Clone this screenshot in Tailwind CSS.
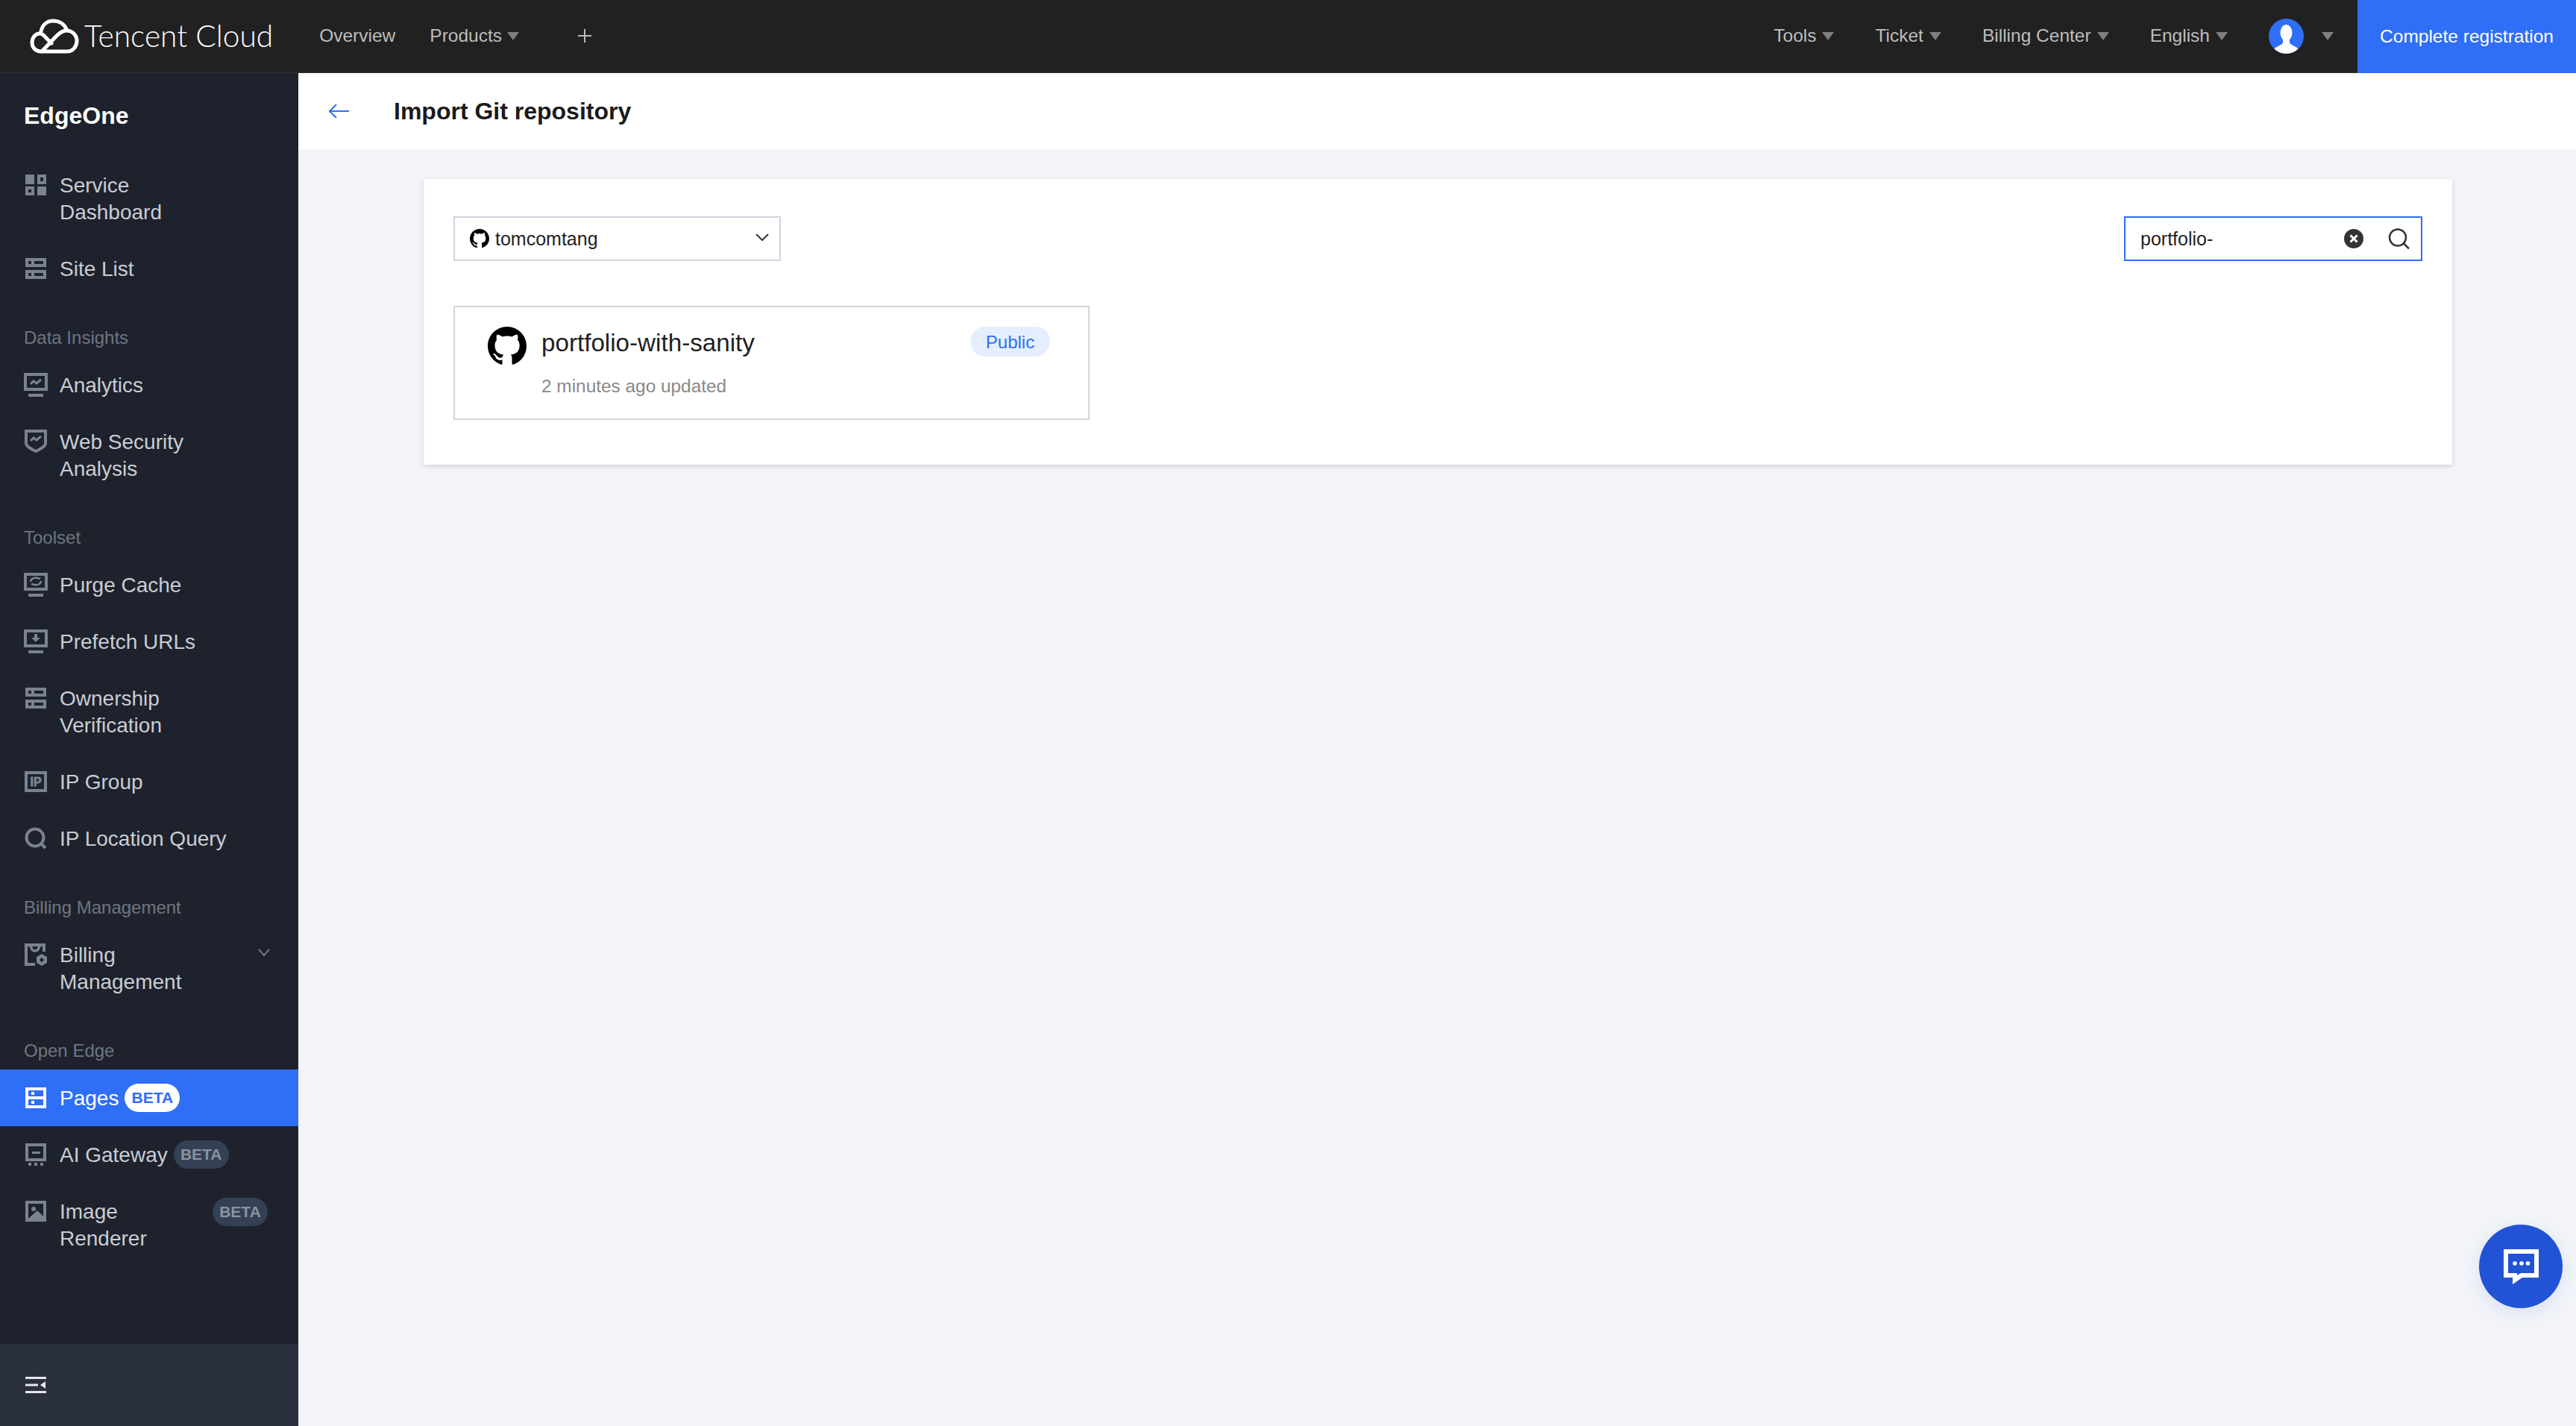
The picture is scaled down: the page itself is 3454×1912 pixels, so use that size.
<!DOCTYPE html>
<html lang="en">
<head>
  <meta charset="UTF-8" />
  <title>Import Git repository</title>
  <script src="https://cdn.jsdelivr.net/npm/@tailwindcss/browser@4"></script>
</head>
<body class="relative flex h-screen flex-col overflow-hidden bg-[#f2f4f8] font-['Liberation_Sans',sans-serif] text-[24px] text-[#1f1f1f]">

  <!-- top bar -->
  <header class="flex h-[98px] shrink-0 items-center border-b-2 border-[#2b2b2b] bg-[#212121] text-[24.5px] text-[#bdbdbd]">
    <svg class="ml-10 h-[47px] w-[66px] shrink-0" viewBox="0 0 66 47" fill="none" stroke="#fff" stroke-width="5" stroke-linecap="round" stroke-linejoin="round">
      <path d="M49 14C46 7 39 3 31 3C23 3 17 8 15 17" />
      <path d="M29 33L22 26C19 22 16 20 13 20C7 20 3 26 3 32C3 39 8 44 15 44H50C58 44 63 37 63 30C63 22 57 16 49 16C43 16 39 20 35 24L16 44" />
    </svg>
    <span class="ml-[7px] font-['Lato',sans-serif] text-[40.7px] leading-none font-light text-white">Tencent Cloud</span>
    <a class="ml-[62px]">Overview</a>
    <a class="ml-[46px] flex items-center gap-[7px]">Products
      <svg class="h-[11px] w-4" viewBox="0 0 16 11"><path d="M0 0h16L8 11z" fill="#7f7f7f" /></svg>
    </a>
    <svg class="ml-[79px] h-[18px] w-[18px]" viewBox="0 0 18 18"><path d="M8 0h2v8h8v2h-8v8H8v-8H0V8h8z" fill="#bdbdbd" /></svg>

    <div class="ml-auto flex items-center gap-[55px]">
      <a class="flex items-center gap-2">Tools
        <svg class="h-[11px] w-4" viewBox="0 0 16 11"><path d="M0 0h16L8 11z" fill="#7f7f7f" /></svg>
      </a>
      <a class="flex items-center gap-2">Ticket
        <svg class="h-[11px] w-4" viewBox="0 0 16 11"><path d="M0 0h16L8 11z" fill="#7f7f7f" /></svg>
      </a>
      <a class="flex items-center gap-2">Billing Center
        <svg class="h-[11px] w-4" viewBox="0 0 16 11"><path d="M0 0h16L8 11z" fill="#7f7f7f" /></svg>
      </a>
      <a class="flex items-center gap-2">English
        <svg class="h-[11px] w-4" viewBox="0 0 16 11"><path d="M0 0h16L8 11z" fill="#7f7f7f" /></svg>
      </a>
      <div class="flex items-center gap-6">
        <svg class="h-[47px] w-[47px]" viewBox="0 0 47 47">
          <clipPath id="avatarClip"><circle cx="23.5" cy="23.5" r="23.5" /></clipPath>
          <circle cx="23.5" cy="23.5" r="23.5" fill="#2f6ef6" />
          <g clip-path="url(#avatarClip)" fill="#fff">
            <ellipse cx="23.5" cy="19" rx="8" ry="11" />
            <path d="M19 26h9v6c0 3 9 5 12 9v6H7v-6c3-4 12-6 12-9z" />
          </g>
        </svg>
        <svg class="h-[11px] w-4" viewBox="0 0 16 11"><path d="M0 0h16L8 11z" fill="#7f7f7f" /></svg>
      </div>
    </div>
    <a class="ml-8 flex h-[98px] w-[293px] shrink-0 items-center justify-center self-start bg-[#2f6ef6] text-white">Complete registration</a>
  </header>

  <div class="flex min-h-0 flex-1">
    <!-- sidebar -->
    <aside class="flex w-[400px] shrink-0 flex-col bg-[#1e222d] text-[28px] leading-9 text-[#c9cdd3]">
      <div class="flex h-[112px] shrink-0 items-center pt-[2px] pl-8 text-[32px] font-bold text-white">EdgeOne</div>

      <nav class="flex-1">
        <a class="flex h-[112px] items-start gap-4 pt-5 pl-8">
          <span class="flex h-9 w-8 shrink-0 items-center justify-center text-[#7b838e]">
            <svg class="h-7 w-7" viewBox="0 0 28 28" fill="currentColor" fill-rule="evenodd"><path d="M0 0h12v13H0zM16 0h12v13H16zM20 4v5h4V4zM0 16h12v12H0zM4 20v4h4v-4zM16 16h12v12H16z" /></svg>
          </span>
          <span class="pt-px">Service<br />Dashboard</span>
        </a>
        <a class="flex h-[76px] items-center gap-4 pl-8">
          <span class="flex h-9 w-8 shrink-0 items-center justify-center text-[#7b838e]">
            <svg class="h-7 w-7" viewBox="0 0 28 28" fill="currentColor" fill-rule="evenodd"><path d="M0 0h28v12H0zM4 4v4h4V4zM12 4v4h12V4zM0 16h28v12H0zM4 20v4h4v-4zM12 20v4h12v-4z" /></svg>
          </span>
          <span class="pt-[2px]">Site List</span>
        </a>

        <div class="mt-7 flex h-[52px] items-center pt-[2px] pl-8 text-[24px] text-[#6f7680]">Data Insights</div>
        <a class="flex h-[76px] items-center gap-4 pl-8">
          <span class="flex h-9 w-8 shrink-0 items-center justify-center text-[#7b838e]">
            <svg class="h-8 w-8" viewBox="0 0 32 32" fill="none">
              <path d="M0 0h32v24H0zM4 4v16h24V4zM6 28h20v4H6z" fill="currentColor" fill-rule="evenodd" />
              <path d="M9 15l4-4 4 3 6-5" stroke="currentColor" stroke-width="3" />
            </svg>
          </span>
          <span class="pt-[2px]">Analytics</span>
        </a>
        <a class="flex h-[112px] items-start gap-4 pt-5 pl-8">
          <span class="flex h-9 w-8 shrink-0 items-center justify-center text-[#7b838e]">
            <svg class="h-8 w-8" viewBox="0 0 32 32" fill="none" stroke="currentColor">
              <path d="M3 2h26v17c0 3-8 8-13 10C11 27 3 22 3 19z" stroke-width="4" />
              <path d="M9 15l4-4 4 3 6-5" stroke-width="3" />
            </svg>
          </span>
          <span class="pt-px">Web Security<br />Analysis</span>
        </a>

        <div class="mt-7 flex h-[52px] items-center pt-[2px] pl-8 text-[24px] text-[#6f7680]">Toolset</div>
        <a class="flex h-[76px] items-center gap-4 pl-8">
          <span class="flex h-9 w-8 shrink-0 items-center justify-center text-[#7b838e]">
            <svg class="h-8 w-8" viewBox="0 0 32 32" fill="none">
              <path d="M0 0h32v24H0zM4 4v16h24V4zM6 28h20v4H6z" fill="currentColor" fill-rule="evenodd" />
              <path d="M9 12c0-4 5-6 9-5l4 1M23 11c0 4-5 6-9 5l-4-1" stroke="currentColor" stroke-width="2.5" />
            </svg>
          </span>
          <span class="pt-[2px]">Purge Cache</span>
        </a>
        <a class="flex h-[76px] items-center gap-4 pl-8">
          <span class="flex h-9 w-8 shrink-0 items-center justify-center text-[#7b838e]">
            <svg class="h-8 w-8" viewBox="0 0 32 32" fill="currentColor">
              <path d="M0 0h32v24H0zM4 4v16h24V4zM6 28h20v4H6z" fill-rule="evenodd" />
              <path d="M14 6h4v5h4l-6 6-6-6h4z" />
            </svg>
          </span>
          <span class="pt-[2px]">Prefetch URLs</span>
        </a>
        <a class="flex h-[112px] items-start gap-4 pt-5 pl-8">
          <span class="flex h-9 w-8 shrink-0 items-center justify-center text-[#7b838e]">
            <svg class="h-7 w-7" viewBox="0 0 28 28" fill="currentColor" fill-rule="evenodd"><path d="M0 0h28v12H0zM4 4v4h4V4zM12 4v4h12V4zM0 16h28v12H0zM4 20v4h4v-4zM12 20v4h12v-4z" /></svg>
          </span>
          <span class="pt-px">Ownership<br />Verification</span>
        </a>
        <a class="flex h-[76px] items-center gap-4 pl-8">
          <span class="flex h-9 w-8 shrink-0 items-center justify-center text-[#7b838e]">
            <svg class="h-7 w-[30px]" viewBox="0 0 30 28" fill="currentColor">
              <path d="M0 0h30v28H0zM4 4v20h22V4z" fill-rule="evenodd" />
              <text x="15" y="19.5" text-anchor="middle" font-size="16" font-weight="700" font-family="Liberation Sans" stroke="currentColor" stroke-width="0.8">IP</text>
            </svg>
          </span>
          <span class="pt-[2px]">IP Group</span>
        </a>
        <a class="flex h-[76px] items-center gap-4 pl-8">
          <span class="flex h-9 w-8 shrink-0 items-center justify-center text-[#7b838e]">
            <svg class="h-[30px] w-[30px]" viewBox="0 0 30 30" fill="none" stroke="currentColor" stroke-width="4">
              <circle cx="14" cy="14" r="11.5" />
              <path d="M22 22l6 6" />
            </svg>
          </span>
          <span class="pt-[2px]">IP Location Query</span>
        </a>

        <div class="mt-7 flex h-[52px] items-center pt-[2px] pl-8 text-[24px] text-[#6f7680]">Billing Management</div>
        <a class="flex h-[112px] items-start gap-4 pt-5 pl-8">
          <span class="flex h-9 w-8 shrink-0 items-center justify-center text-[#7b838e]">
            <svg class="h-[30px] w-[30px]" viewBox="0 0 30 30" fill="none" stroke="currentColor">
              <path d="M26 11V2H2v26h12" stroke-width="4" />
              <path d="M8 3c1 5 3 7 6 7s5-2 6-7" stroke-width="3.5" />
              <path d="M23 14l7 4v8l-7 4-7-4v-8zM23 19.500a2.500 2.500 0 1 0 .01 0z" fill="currentColor" fill-rule="evenodd" stroke="none" />
            </svg>
          </span>
          <span class="pt-px">Billing<br />Management</span>
          <svg class="mt-[10px] mr-[38px] ml-auto h-[11px] w-4 text-[#6f7680]" viewBox="0 0 16 11" fill="none" stroke="currentColor" stroke-width="2"><path d="M1 1l7 8 7-8" /></svg>
        </a>

        <div class="mt-7 flex h-[52px] items-center pt-[2px] pl-8 text-[24px] text-[#6f7680]">Open Edge</div>
        <a class="flex h-[76px] items-center gap-4 bg-[#2f6ef6] pl-8 text-white">
          <span class="flex h-9 w-8 shrink-0 items-center justify-center">
            <svg class="h-7 w-7" viewBox="0 0 28 28" fill="currentColor" fill-rule="evenodd"><path d="M0 0h28v28H0zM4 4v8h20V4zM4 16v8h20v-8zM8 6h4v4H8zM8 18h4v4H8z" /></svg>
          </span>
          <span class="flex items-center gap-2">
            <span class="pt-[2px]">Pages</span>
            <span class="flex h-[38px] w-[74px] items-center justify-center rounded-full bg-white text-[21px] font-bold text-[#2f6ef6]">BETA</span>
          </span>
        </a>
        <a class="flex h-[76px] items-center gap-4 pl-8">
          <span class="flex h-9 w-8 shrink-0 items-center justify-center text-[#7b838e]">
            <svg class="h-[30px] w-7" viewBox="0 0 28 30" fill="currentColor">
              <path d="M0 0h28v24H0zM4 4v16h20V4zM9 11h11v3H9z" fill-rule="evenodd" />
              <path d="M4 26h4v4H4zM12 26h4v4h-4zM20 26h4v4h-4z" />
            </svg>
          </span>
          <span class="flex items-center gap-2">
            <span class="pt-[2px]">AI Gateway</span>
            <span class="flex h-[38px] w-[74px] items-center justify-center rounded-full bg-[#344055] text-[21px] font-bold text-[#8b93a0]">BETA</span>
          </span>
        </a>
        <a class="flex h-[112px] items-start gap-4 pt-5 pl-8">
          <span class="flex h-9 w-8 shrink-0 items-center justify-center text-[#7b838e]">
            <svg class="h-7 w-7" viewBox="0 0 28 28" fill="currentColor">
              <path d="M0 0h28v28H0zM4 4v20h20V4z" fill-rule="evenodd" />
              <circle cx="11" cy="11" r="3" />
              <path d="M4 24l12-11 8 8v3z" />
            </svg>
          </span>
          <span class="pt-px">Image<br />Renderer</span>
          <span class="mr-[41px] ml-auto flex h-[38px] w-[74px] items-center justify-center rounded-full bg-[#344055] text-[21px] font-bold text-[#8b93a0]">BETA</span>
        </a>
      </nav>

      <div class="flex h-[110px] shrink-0 items-center bg-[#2a303d] pl-[34px]">
        <svg class="h-[22px] w-7" viewBox="0 0 28 22" fill="#e5e7eb"><path d="M0 0h28v3H0zM0 9.500h17v3H0zM0 19h28v3H0zM27 6v10l-7-5z" /></svg>
      </div>
    </aside>

    <!-- main -->
    <main class="min-w-0 flex-1">
      <div class="flex h-[102px] items-center bg-white pl-[41px]">
        <svg class="h-[20px] w-[27px]" viewBox="0 0 27 20" fill="none" stroke="#2f6ef6" stroke-width="2"><path d="M27 10H2M10 1l-9 9 9 9" /></svg>
        <h1 class="ml-[60px] text-[32px] font-bold text-[#1a1a1a]">Import Git repository</h1>
      </div>

      <section class="mx-[168px] mt-10 h-[383px] w-[2720px] bg-white px-10 pt-[50px] shadow-[0_2px_6px_rgba(54,58,80,0.18)]">
        <div class="flex items-center justify-between">
          <div class="flex h-[60px] w-[439px] items-center border-2 border-[#cfd5de] pl-5 pr-[14px]">
            <svg class="h-[26px] w-[26px] shrink-0" viewBox="0 0 16 16" fill="#000"><path d="M8 0C3.580 0 0 3.580 0 8c0 3.540 2.290 6.530 5.470 7.590.4.07.55-.17.55-.38 0-.19-.01-.82-.01-1.490-2.010.37-2.530-.49-2.690-.94-.09-.23-.48-.94-.82-1.130-.28-.15-.68-.52-.01-.53.63-.01 1.080.58 1.230.82.72 1.210 1.870.87 2.330.66.07-.52.28-.87.51-1.070-1.780-.2-3.640-.89-3.640-3.950 0-.87.31-1.590.82-2.150-.08-.2-.36-1.020.08-2.120 0 0 .67-.21 2.200.82.64-.18 1.320-.27 2-.27.68 0 1.360.09 2 .27 1.530-1.040 2.200-.82 2.200-.82.44 1.100.16 1.920.08 2.120.51.56.82 1.270.82 2.150 0 3.070-1.870 3.750-3.650 3.950.29.25.54.73.54 1.480 0 1.070-.01 1.930-.01 2.200 0 .21.15.46.55.38A8.013 8.013 0 0016 8c0-4.420-3.580-8-8-8z" /></svg>
            <span class="ml-2 pt-[2px] text-[25px]">tomcomtang</span>
            <svg class="mt-[-4px] ml-auto h-[10px] w-[18px]" viewBox="0 0 18 10" fill="none" stroke="#333" stroke-width="2"><path d="M1 1l8 8 8-8" /></svg>
          </div>

          <div class="flex h-[60px] w-[400px] items-center border-2 border-[#2f6ef6] pl-5 pr-[15px]">
            <span class="pt-[2px] text-[25px]">portfolio-</span>
            <svg class="ml-auto h-[26px] w-[26px]" viewBox="0 0 26 26">
              <circle cx="13" cy="13" r="13" fill="#333" />
              <path d="M8.500 8.500l9 9M17.500 8.500l-9 9" stroke="#fff" stroke-width="3" />
            </svg>
            <svg class="ml-[33px] h-[28px] w-[29px]" viewBox="0 0 29 28" fill="none" stroke="#333" stroke-width="2.500">
              <circle cx="13" cy="12.500" r="11" />
              <path d="M21 20.500l7 7" />
            </svg>
          </div>
        </div>

        <div class="mt-[60px] flex h-[153px] w-[853px] items-start justify-between border-2 border-[#cfd5de] pt-[26px] pr-[51px] pl-11">
          <div class="flex gap-5">
            <svg class="h-[52px] w-[52px] shrink-0" viewBox="0 0 16 16" fill="#000"><path d="M8 0C3.580 0 0 3.580 0 8c0 3.540 2.290 6.530 5.470 7.590.4.07.55-.17.55-.38 0-.19-.01-.82-.01-1.490-2.010.37-2.530-.49-2.690-.94-.09-.23-.48-.94-.82-1.130-.28-.15-.68-.52-.01-.53.63-.01 1.080.58 1.230.82.72 1.210 1.870.87 2.330.66.07-.52.28-.87.51-1.070-1.780-.2-3.640-.89-3.640-3.950 0-.87.31-1.590.82-2.150-.08-.2-.36-1.020.08-2.120 0 0 .67-.21 2.200.82.64-.18 1.320-.27 2-.27.68 0 1.360.09 2 .27 1.530-1.040 2.200-.82 2.200-.82.44 1.100.16 1.920.08 2.120.51.56.82 1.270.82 2.150 0 3.070-1.870 3.750-3.650 3.950.29.25.54.73.54 1.480 0 1.070-.01 1.930-.01 2.200 0 .21.15.46.55.38A8.013 8.013 0 0016 8c0-4.420-3.580-8-8-8z" /></svg>
            <div>
              <div class="h-[46px] text-[33.2px] leading-[44px]">portfolio-with-sanity</div>
              <div class="mt-4 text-[24.4px] leading-9 text-[#888]">2 minutes ago updated</div>
            </div>
          </div>
          <span class="flex h-10 w-[107px] items-center justify-center rounded-full bg-[#e5eeff] pt-px text-[#2f6ef6]">Public</span>
        </div>
      </section>
    </main>
  </div>

  <!-- floating chat button -->
  <button class="absolute top-[1642px] left-[3324px] flex h-[112px] w-[112px] items-center justify-center rounded-full bg-[#2153d4] shadow-[0_6px_24px_rgba(33,83,212,0.12)]">
    <svg class="h-[47px] w-[47px]" viewBox="0 0 47 47" fill="#fff">
      <path d="M0 0h47v38H25L12 47V38H0zM6 6v26h12v3l5-3h18V6z" fill-rule="evenodd" />
      <circle cx="15" cy="19" r="2.800" />
      <circle cx="24" cy="19" r="2.800" />
      <circle cx="32.500" cy="19" r="2.800" />
    </svg>
  </button>
</body>
</html>
